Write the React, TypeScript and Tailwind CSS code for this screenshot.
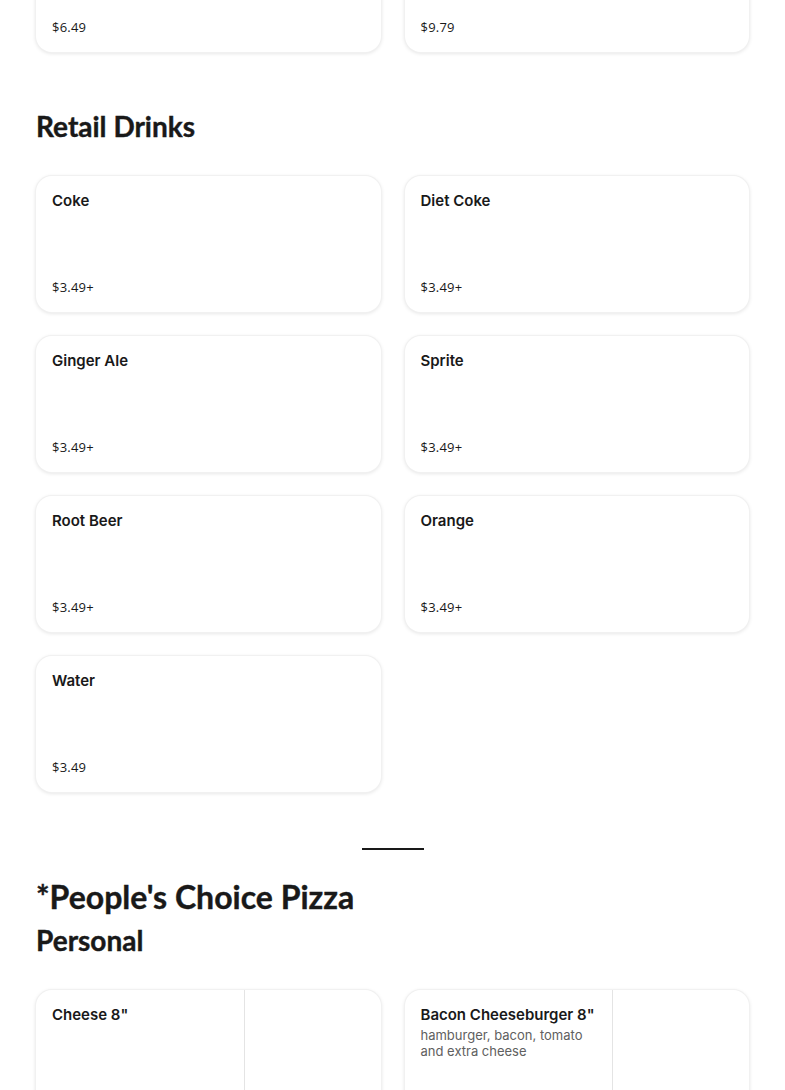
import React from 'react';

interface Item {
  name:  string;
  price: string;
  desc?: string;
}

const drinks: Item[] = [
  { name: 'Coke',       price: '$3.49+' },
  { name: 'Diet Coke',  price: '$3.49+' },
  { name: 'Ginger Ale', price: '$3.49+' },
  { name: 'Sprite',     price: '$3.49+' },
  { name: 'Root Beer',  price: '$3.49+' },
  { name: 'Orange',     price: '$3.49+' },
  { name: 'Water',      price: '$3.49' },
];

const pizzas: Item[] = [
  { name: 'Cheese 8"', price: '' },
  { name: 'Bacon Cheeseburger 8"', price: '', desc: 'hamburger, bacon, tomato and extra cheese' },
];

const card = 'rounded-2xl bg-white shadow-[0_1px_4px_rgba(0,0,0,0.14)] ring-1 ring-[#f1f1f1]';
const priceCls = "text-[13px] leading-4 tracking-[0.2px] text-[#191919] font-['Open_Sans',sans-serif]";
const heading = "font-bold text-[#191919] font-['Lato',sans-serif] [-webkit-text-stroke:0.4px_#191919]";

function ItemCard({ item }: { item: Item }) {
  return (
    <div className={`${card} h-[136px] flex flex-col justify-between px-4 pt-[15px] pb-[17px]`}>
      <div className="text-[15px] font-semibold leading-5 text-[#191919]">{item.name}</div>
      <div className={priceCls}>{item.price}</div>
    </div>
  );
}

function PizzaCard({ item }: { item: Item }) {
  return (
    <div className={`${card} h-[136px] flex overflow-hidden`}>
      <div className="flex-1 px-4 pt-[15px]">
        <div className="text-[15px] font-semibold leading-5 text-[#191919]">{item.name}</div>
        {item.desc && <div className="text-[13px] leading-4 text-[#606060] mt-0.5">{item.desc}</div>}
      </div>
      <div className="w-[137px] border-l border-[#e4e4e4]" />
    </div>
  );
}

export default function App() {
  return (
    <div className="bg-white h-[1090px] overflow-hidden font-['Inter',sans-serif]">
      <div className="px-9">
        <div className="grid grid-cols-2 gap-6 -mt-[84px]">
          <div className={`${card} h-[136px] flex flex-col justify-end px-4 pb-[17px]`}>
            <div className={priceCls}>$6.49</div>
          </div>
          <div className={`${card} h-[136px] flex flex-col justify-end px-4 pb-[17px]`}>
            <div className={priceCls}>$9.79</div>
          </div>
        </div>

        <h2 className={`mt-[56px] text-[28px] leading-9 ${heading}`}>Retail Drinks</h2>

        <div className="mt-8 grid grid-cols-2 gap-6">
          {drinks.map((d) => <ItemCard key={d.name} item={d} />)}
        </div>

        <div className="mt-[56px] flex justify-center">
          <div className="w-[62px] h-[2px] bg-[#191919]" />
        </div>

        <h2 className={`mt-[27px] text-[32px] leading-10 ${heading}`}>*People&apos;s Choice Pizza</h2>
        <h3 className={`mt-[7px] text-[28px] leading-8 ${heading}`}>Personal</h3>

        <div className="mt-[34px] grid grid-cols-2 gap-6">
          {pizzas.map((p) => <PizzaCard key={p.name} item={p} />)}
        </div>
      </div>
    </div>
  );
}
